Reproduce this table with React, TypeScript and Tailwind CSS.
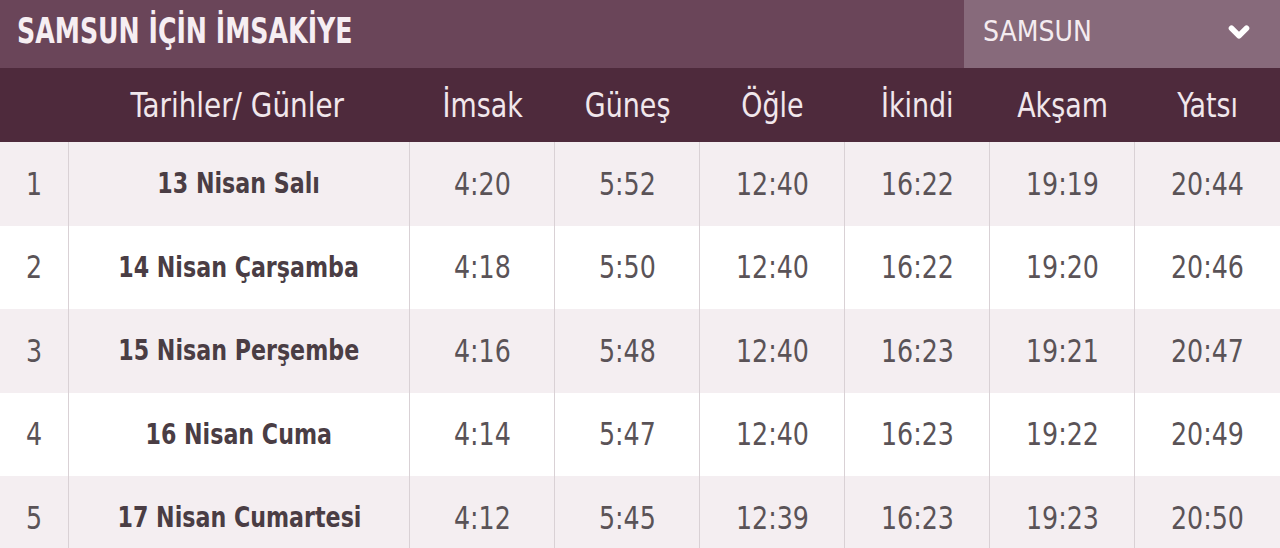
import { ChevronDown } from "lucide-react";

const rows = [
  { no: 1, date: "13 Nisan Salı", times: ["4:20", "5:52", "12:40", "16:22", "19:19", "20:44"] },
  { no: 2, date: "14 Nisan Çarşamba", times: ["4:18", "5:50", "12:40", "16:22", "19:20", "20:46"] },
  { no: 3, date: "15 Nisan Perşembe", times: ["4:16", "5:48", "12:40", "16:23", "19:21", "20:47"] },
  { no: 4, date: "16 Nisan Cuma", times: ["4:14", "5:47", "12:40", "16:23", "19:22", "20:49"] },
  { no: 5, date: "17 Nisan Cumartesi", times: ["4:12", "5:45", "12:39", "16:23", "19:23", "20:50"] },
];

const heads = ["İmsak", "Güneş", "Öğle", "İkindi", "Akşam", "Yatsı"];

// narrow face: the condensed DejaVu squeezed a bit more
const font = { fontFamily: '"DejaVu Sans Condensed", "DejaVu Sans", sans-serif' };

export default function App() {
  return (
    <div className="w-[1280px] h-[548px] overflow-hidden bg-white" style={font}>
      {/* title bar */}
      <div className="flex h-[68px] bg-[#6a4559]">
        <h1 className="flex-1 pl-[17px] pt-[10px] text-[36px] font-bold leading-[42px] text-[#f6eef2]">
          <span className="inline-block origin-left scale-x-[0.78]">SAMSUN İÇİN İMSAKİYE</span>
        </h1>
        <div className="flex w-[316px] items-center justify-between bg-[#876a7b] pl-[19px] pr-[26px] pb-[4px]">
          <span className="text-[28px] leading-none text-[#f4ecf0]">SAMSUN</span>
          <ChevronDown className="h-[30px] w-[30px] text-white" strokeWidth={4.5} />
        </div>
      </div>

      {/* header */}
      <div className="grid h-[74px] grid-cols-[69px_341px_repeat(6,145px)] items-center bg-[#4e2a3c] text-[34px] text-[#f1e7ec]">
        <div />
        <div className="text-center pr-[4px]">
          <span className="inline-block scale-x-[0.91]">Tarihler/ Günler</span>
        </div>
        {heads.map((h) => (
          <div key={h} className="text-center">
            <span className="inline-block scale-x-[0.88]">{h}</span>
          </div>
        ))}
      </div>

      {/* rows */}
      {rows.map((r, i) => (
        <div
          key={r.no}
          className={`grid h-[83.5px] grid-cols-[69px_341px_repeat(6,145px)] text-[32px] text-[#5a5357] ${
            i % 2 === 0 ? "bg-[#f4eef1]" : "bg-white"
          }`}
        >
          <div className="flex items-center pl-[25px] border-r border-[#d9d1d5]">
            <span className="inline-block scale-x-[0.88]">{r.no}</span>
          </div>
          <div className="flex items-center justify-center border-r border-[#d9d1d5] font-bold text-[#4a3d44] text-[29px]">
            <span className="inline-block scale-x-[0.85]">{r.date}</span>
          </div>
          {r.times.map((t, j) => (
            <div
              key={j}
              className={`flex items-center justify-center ${j < 5 ? "border-r border-[#d9d1d5]" : ""}`}
            >
              <span className="inline-block scale-x-[0.88]">{t}</span>
            </div>
          ))}
        </div>
      ))}
    </div>
  );
}
